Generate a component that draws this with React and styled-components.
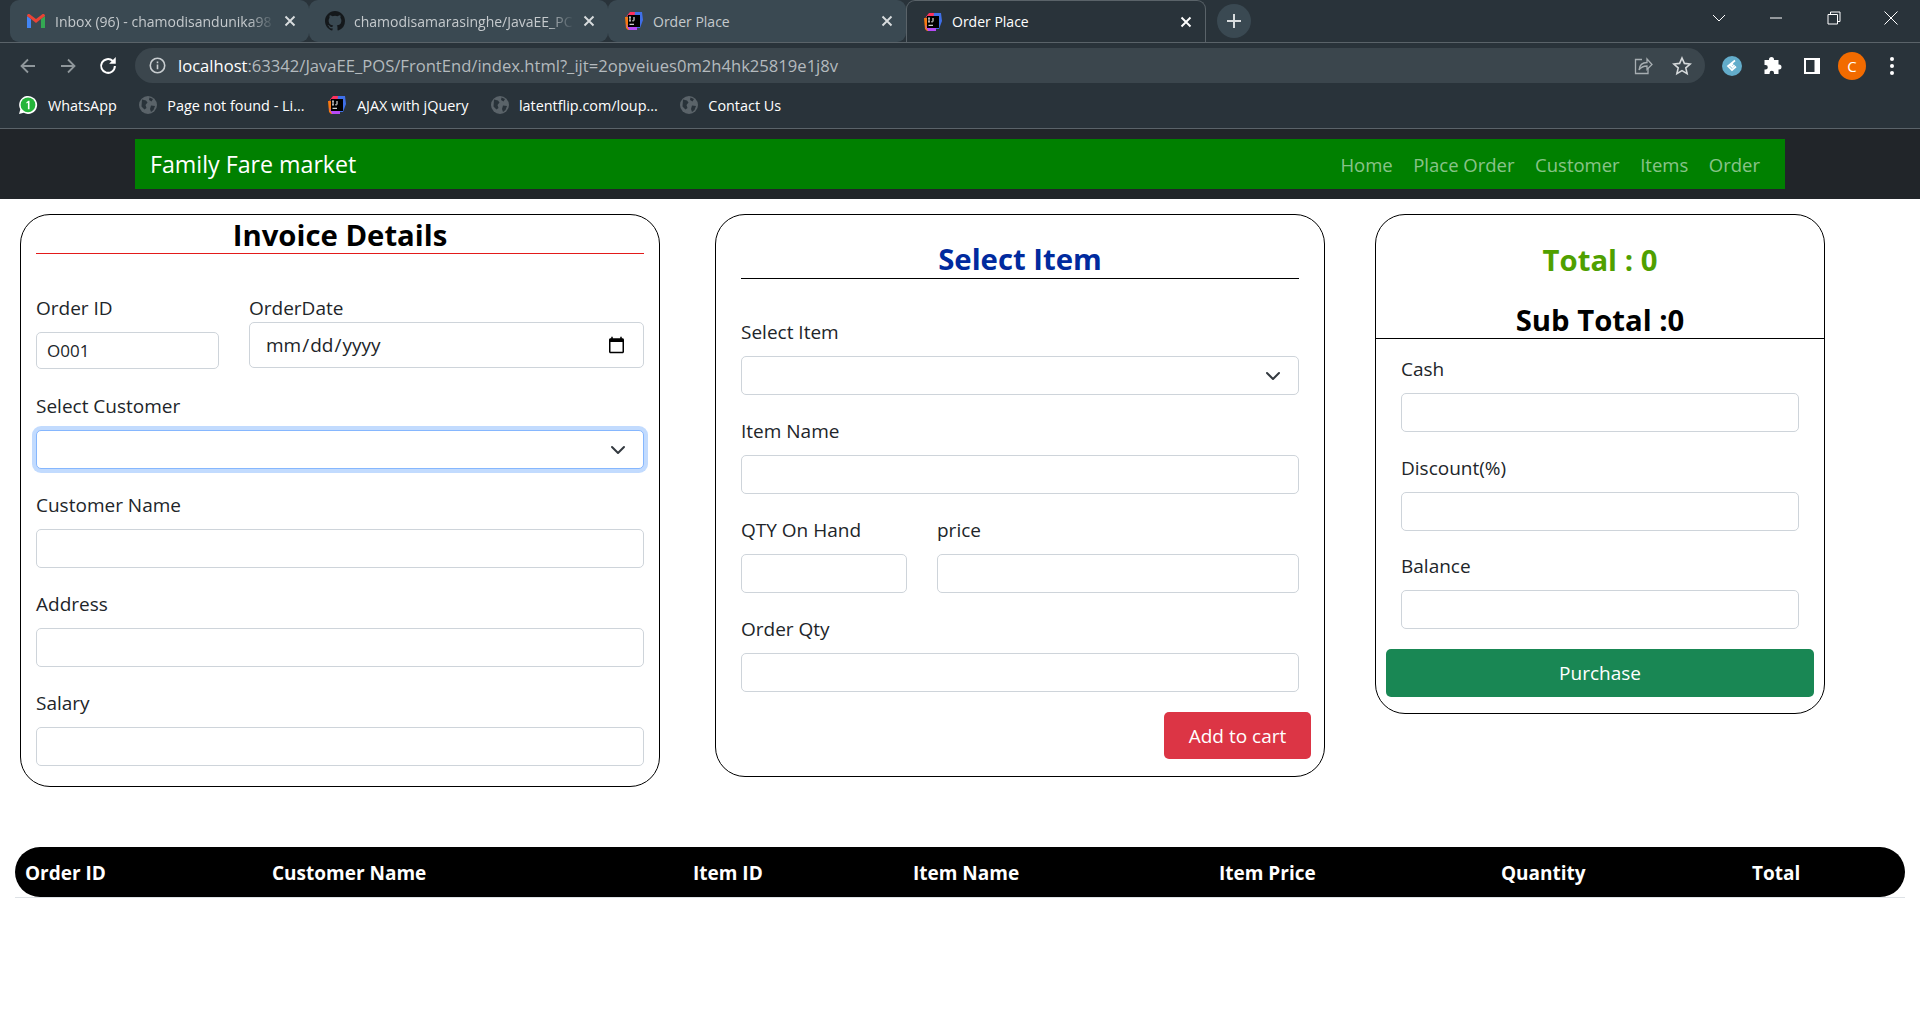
import React from 'react';
import styled, { createGlobalStyle } from 'styled-components';

const FONT = '"Open Sans", "Noto Sans", "Liberation Sans", sans-serif';

const Global = createGlobalStyle`
    html, body {
        margin: 0;
        height: 1030px;
        overflow: hidden;
        background: #fff;
        font-family: ${FONT};
    }
    * { box-sizing: border-box; }
`;

const caret = "data:image/svg+xml,%3csvg xmlns='http://www.w3.org/2000/svg' viewBox='0 0 16 16'%3e%3cpath fill='none' stroke='%23343a40' stroke-linecap='round' stroke-linejoin='round' stroke-width='2' d='M2 5l6 6 6-6'/%3e%3c/svg%3e";

/* browser frame */
const TabStrip = styled.div`
    height: 43px;
    background: #29333a;
    border-bottom: 1px solid #5a6369;
    display: flex;
    align-items: flex-start;
    padding-left: 10px;
`;
const Tab = styled.div`
    width: ${p => p.$width}px;
    height: 42px;
    padding: 0 13px 0 16px;
    display: flex;
    align-items: center;
    gap: 9px;
    font-size: 14px;
    color: ${p => (p.$active ? '#fff' : '#c5cacd')};
    background: ${p => (p.$active ? '#29333a' : '#3a4952')};
    border-radius: 9px 9px ${p => (p.$active ? '0 0' : '9px 9px')};
    border: ${p => (p.$active ? '1px solid #5a6369' : 'none')};
    border-bottom: none;
    margin-bottom: -1px;
`;
const TabTitle = styled.span`
    flex: 1;
    white-space: nowrap;
    overflow: hidden;
    mask-image: ${p => (p.$fade ? 'linear-gradient(to right, #000 88%, transparent)' : 'none')};
`;
const NewTab = styled.div`
    width: 34px;
    height: 34px;
    margin: 4px 0 0 11px;
    border-radius: 50%;
    background: #3a4952;
    display: flex;
    align-items: center;
    justify-content: center;
`;
const WindowControls = styled.div`
    margin-left: auto;
    display: flex;
    align-items: center;
    height: 36px;
`;
const WinButton = styled.div`
    width: 57.5px;
    height: 36px;
    display: flex;
    align-items: center;
    justify-content: center;
`;
const Toolbar = styled.div`
    height: 45px;
    background: #29333a;
    display: flex;
    align-items: center;
`;
const NavIcon = styled.div`
    width: 40px;
    height: 35px;
    display: flex;
    align-items: center;
    justify-content: center;
`;
const NavIcons = styled.div`
    display: flex;
    padding-left: 8px;
    width: 135px;
`;
const AddressBar = styled.div`
    width: 1570px;
    height: 35px;
    border-radius: 18px;
    background: #3b464d;
    display: flex;
    align-items: center;
    padding: 0 4px 0 14px;
    font-size: 16.6px;
    color: #b4babe;
    white-space: nowrap;
`;
const Host = styled.span`
    color: #fff;
`;
const Url = styled.span`
    margin-left: 12px;
    flex: 1;
`;
const BarIcon = styled.div`
    width: 39px;
    display: flex;
    justify-content: center;
`;
const Extensions = styled.div`
    display: flex;
    align-items: center;
    padding-left: 7px;
`;
const ExtSlot = styled.div`
    width: 40px;
    display: flex;
    justify-content: center;
`;
const Avatar = styled.div`
    width: 28px;
    height: 28px;
    border-radius: 50%;
    background: #f26b00;
    color: #fff;
    font-size: 15px;
    display: flex;
    align-items: center;
    justify-content: center;
`;
const Bookmarks = styled.div`
    height: 41px;
    background: #29333a;
    border-bottom: 1px solid #5a6369;
    display: flex;
    align-items: center;
    padding: 0 0 6px 18px;
    gap: 22.5px;
`;
const Bookmark = styled.div`
    display: flex;
    align-items: center;
    gap: 10px;
    font-size: 14.4px;
    color: #fff;
    white-space: nowrap;
`;

/* page navbar */
const NavShell = styled.nav`
    height: 70px;
    background: #212529;
    padding: 10px 135px;
`;
const NavInner = styled.div`
    height: 50px;
    background: #008000;
    display: flex;
    align-items: center;
    justify-content: space-between;
    padding: 0 25px 0 15px;
`;
const Brand = styled.div`
    color: #fff;
    font-size: 23.2px;
`;
const NavLinks = styled.div`
    display: flex;
    gap: 20.5px;
`;
const NavLink = styled.a`
    color: rgba(255, 255, 255, 0.55);
    font-size: 18.5px;
`;

/* cards */
const Cards = styled.div`
    display: flex;
    align-items: flex-start;
    padding: 15px 0 0 20px;
`;
const Card = styled.section`
    width: ${p => p.$width}px;
    margin-right: ${p => p.$gap || 0}px;
    padding: ${p => p.$padding};
    border: 1px solid #000;
    border-radius: 30px;
    background: #fff;
`;
const Heading = styled.h2`
    margin: 0;
    font-size: 29.3px;
    font-weight: 700;
    text-align: center;
    line-height: 38px;
    color: ${p => p.$color || '#000'};
`;
const UnderlinedHeading = styled(Heading)`
    border-bottom: 1px solid ${p => p.$rule};
    padding-top: ${p => p.$top}px;
    height: ${p => p.$height}px;
    margin-bottom: ${p => p.$below}px;
`;
const TotalsHead = styled.div`
    margin: 0 -10px 18px;
    height: 124px;
    padding-top: 26px;
    border-bottom: 1px solid #000;
`;
const SubTotal = styled(Heading)`
    margin-top: 22px;
`;
const Field = styled.div`
    width: ${p => (p.$width ? p.$width + 'px' : 'auto')};
    flex: ${p => (p.$grow ? 1 : 'none')};
    margin-bottom: ${p => (p.$mb === undefined ? 24 : p.$mb)}px;
`;
const FieldRow = styled.div`
    display: flex;
    gap: 30px;
    margin-bottom: ${p => p.$mb || 0}px;
`;
const Label = styled.label`
    display: block;
    height: 24px;
    line-height: 24px;
    font-size: 19px;
    color: #212529;
    margin-bottom: ${p => (p.$gap === undefined ? 12 : p.$gap)}px;
`;
const Input = styled.input`
    display: block;
    width: 100%;
    height: ${p => p.$height || 39}px;
    padding: ${p => p.$padding || '0 10px'};
    font-family: ${FONT};
    font-size: ${p => p.$size || 17}px;
    color: #212529;
    background: #fff;
    border: 1px solid #ced4da;
    border-radius: 5px;
    outline: none;
`;
const Select = styled.select`
    display: block;
    width: 100%;
    height: 39px;
    appearance: none;
    padding: 0 36px 0 12px;
    font-family: ${FONT};
    font-size: 17px;
    background: #fff url("${caret}") no-repeat right 17px center / 16px 16px;
    border: 1px solid ${p => (p.$focused ? '#86b7fe' : '#ced4da')};
    border-radius: 5px;
    box-shadow: ${p => (p.$focused ? '0 0 0 4px rgba(13, 110, 253, 0.25)' : 'none')};
    outline: none;
`;
const ActionRow = styled.div`
    display: flex;
    justify-content: flex-end;
    margin-right: -12px;
`;
const AddButton = styled.button`
    width: 147px;
    height: 47px;
    border: none;
    border-radius: 5px;
    background: #dc3545;
    color: #fff;
    font-family: ${FONT};
    font-size: 19px;
`;
const PurchaseButton = styled.button`
    display: block;
    width: 100%;
    height: 48px;
    margin-top: -4px;
    border: none;
    border-radius: 5px;
    background: #198754;
    color: #fff;
    font-family: ${FONT};
    font-size: 19px;
`;
const CashFields = styled.div`
    padding: 0 15px;
`;

/* table */
const OrderTable = styled.div`
    margin: 60px 15px 0;
    border-bottom: 1px solid #dee2e6;
`;
const HeadRow = styled.div`
    height: 50px;
    padding: 1px 0 0 10px;
    background: #000;
    border-radius: 25px;
    display: grid;
    grid-template-columns: 247px 421px 220px 306px 282px 251px 1fr;
    align-items: center;
`;
const HeadCell = styled.div`
    color: #fff;
    font-weight: 700;
    font-size: 19px;
`;

const Close = ({ color = '#fff' }) => (
    <svg width="12" height="12" viewBox="0 0 12 12"><path d="M1.5 1.5l9 9M10.5 1.5l-9 9" stroke={color} strokeWidth="1.9" /></svg>
);
const Gmail = () => (
    <svg width="20" height="16" viewBox="0 0 20 16">
        <path d="M1 15V3l4 3v9z" fill="#4285f4" /><path d="M15 15V6l4-3v12z" fill="#34a853" />
        <path d="M1 3c0-2 2-2.5 3-1.5L10 6l6-4.500c1-1 3-.5 3 1.500l-4 3-5 4-5-4z" fill="#ea4335" />
    </svg>
);
const GitHub = () => (
    <svg width="20" height="20" viewBox="0 0 16 16"><path fill="#14181b" d="M8 0C3.580 0 0 3.580 0 8c0 3.540 2.290 6.530 5.470 7.590.4.070.55-.17.55-.38v-1.340c-2.230.48-2.700-1.070-2.700-1.070-.36-.92-.89-1.170-.89-1.170-.73-.5.050-.49.050-.49.800.060 1.230.82 1.230.82.710 1.220 1.870.87 2.330.66.070-.52.280-.87.510-1.070-1.780-.2-3.640-.89-3.640-3.950 0-.87.310-1.590.820-2.150-.08-.2-.36-1.020.08-2.120 0 0 .67-.21 2.200.82a7.600 7.600 0 0 1 4 0c1.530-1.040 2.200-.82 2.200-.82.440 1.100.160 1.920.080 2.120.510.560.820 1.270.820 2.150 0 3.070-1.870 3.750-3.650 3.950.290.250.540.730.540 1.480v2.200c0 .21.150.46.550.38A8 8 0 0 0 16 8c0-4.420-3.580-8-8-8z" /></svg>
);
const IntelliJ = () => (
    <svg width="20" height="20" viewBox="0 0 20 20">
        <path d="M2 6l4-5h6v4H4z" fill="#fe315d" /><path d="M11 1h7l1 8-3 8H9z" fill="#3f6fe8" />
        <path d="M1 6h4v10l4 3H4l-2-2z" fill="#f97a12" /><path d="M2 13l3 6h8v-3H5z" fill="#b74af7" />
        <rect x="4" y="4" width="12" height="12" fill="#000" />
        <rect x="5.5" y="12.8" width="4.5" height="1" fill="#fff" />
        <path d="M6 6v4M5.200 6h1.600M5.200 10h1.600M10 6v3.300c0 .7-1.200.9-1.800.3" stroke="#fff" strokeWidth="1" fill="none" />
    </svg>
);
const Globe = () => (
    <svg width="18" height="18" viewBox="0 0 18 18">
        <circle cx="9" cy="9" r="9" fill="#5a6369" />
        <path d="M3 3.500l4 1 1.500 2-2 2.500 1 3-2 1.500-3-3zM10.500 1.500l3.500 1.500-1.500 2.500-2.500-1.500zM12 9.500l4 .5-1.500 4-2.500 2-1-3z" fill="#29333a" />
    </svg>
);
const WhatsApp = () => (
    <svg width="20" height="20" viewBox="0 0 20 20">
        <path d="M1 19l1.300-4.600A9 9 0 1 1 5.700 17.800z" fill="#fff" />
        <circle cx="10" cy="9.8" r="7.4" fill="#25b53a" />
        <path d="M8.400 7.300L10.400 5.700h1.100v8.500h-1.600V7.700L8.400 8.600z" fill="#fff" />
    </svg>
);
const Arrow = ({ flip }) => (
    <svg width="18" height="18" viewBox="0 0 18 18" style={flip ? { transform: 'scaleX(-1)' } : undefined}>
        <path d="M16 9H3M9 2.500L2.500 9 9 15.500" fill="none" stroke="#8f979b" strokeWidth="1.8" />
    </svg>
);
const Reload = () => (
    <svg width="20" height="20" viewBox="0 0 18 18">
        <path d="M15.200 9a6.200 6.200 0 1 1-1.900-4.500" fill="none" stroke="#fff" strokeWidth="1.8" />
        <path d="M16 1v6h-6z" fill="#fff" />
    </svg>
);
const Info = () => (
    <svg width="17" height="17" viewBox="0 0 16 16" fill="none" stroke="#c8cdd0" strokeWidth="1.5">
        <circle cx="8" cy="8" r="6.8" /><path d="M8 7v4.500M8 4.200v1.600" />
    </svg>
);
const Share = () => (
    <svg width="20" height="20" viewBox="0 0 20 20" fill="none" stroke="#a7aeb2" strokeWidth="1.3">
        <path d="M9 3.500H2.500v14h12.500v-5" /><path d="M6 14c.5-5 4-7.500 8-7.500V3l5 5.500-5 5V10c-3.500 0-6 1-8 4z" />
    </svg>
);
const Star = () => (
    <svg width="20" height="20" viewBox="0 0 20 20"><path d="M10 2l2.400 5.400 5.800.6-4.400 3.900 1.300 5.700-5.100-3-5.100 3 1.300-5.700L1.800 8l5.800-.6z" fill="none" stroke="#d5d9db" strokeWidth="1.6" /></svg>
);
const ExtBadge = () => (
    <svg width="20" height="20" viewBox="0 0 20 20">
        <circle cx="10" cy="10" r="10" fill="#63adcb" />
        <path d="M13 4.500L6 10l4 4 4-3.500M11 7.500L8.800 9.800l1.500 1.400 2.200-2" fill="none" stroke="#fff" strokeWidth="1.7" />
    </svg>
);
const Puzzle = () => (
    <svg width="19" height="19" viewBox="0 0 19 19"><path fill="#fff" d="M6 3.500a2.500 2.500 0 0 1 5 0V4h4.500v4.500H16a2.500 2.500 0 0 1 0 5h-.5V18H11v-1a2.200 2.200 0 0 0-4.400 0v1H1.500v-4.500h1a2.300 2.300 0 0 0 0-4.600h-1V4H6z" /></svg>
);
const SidePanel = () => (
    <svg width="18" height="18" viewBox="0 0 18 18"><rect x="1" y="1" width="16" height="16" fill="#fff" /><rect x="3" y="3" width="8.5" height="12" fill="#29333a" /></svg>
);
const Dots = () => (
    <svg width="6" height="20" viewBox="0 0 6 20" fill="#fff"><circle cx="3" cy="3" r="2" /><circle cx="3" cy="10" r="2" /><circle cx="3" cy="17" r="2" /></svg>
);
const Plus = () => (
    <svg width="16" height="16" viewBox="0 0 16 16"><path d="M8 1v14M1 8h14" stroke="#d8dcde" strokeWidth="2" /></svg>
);
const WinIcon = ({ d, size = 14 }) => (
    <svg width={size} height={size} viewBox="0 0 14 14"><path d={d} fill="none" stroke="#fff" strokeWidth="1" /></svg>
);

const columns = ['Order ID', 'Customer Name', 'Item ID', 'Item Name', 'Item Price', 'Quantity', 'Total'];

export default class App extends React.PureComponent {
    render() {
        return (
            <>
                <Global />
                <TabStrip>
                    <Tab $width={299}><Gmail /><TabTitle $fade>Inbox (96) - chamodisandunika98</TabTitle><Close color="#d8dcde" /></Tab>
                    <Tab $width={299}><GitHub /><TabTitle $fade>chamodisamarasinghe/JavaEE_PC</TabTitle><Close color="#d8dcde" /></Tab>
                    <Tab $width={298}><IntelliJ /><TabTitle>Order Place</TabTitle><Close color="#d8dcde" /></Tab>
                    <Tab $width={300} $active><IntelliJ /><TabTitle>Order Place</TabTitle><Close /></Tab>
                    <NewTab><Plus /></NewTab>
                    <WindowControls>
                        <WinButton><WinIcon d="M1 4l6 6 6-6" /></WinButton>
                        <WinButton><WinIcon d="M1 7h12" /></WinButton>
                        <WinButton><WinIcon d="M1 3.500h9.500V13H1zM3.500 3.500V1H13v9.500h-2.500" /></WinButton>
                        <WinButton><WinIcon d="M0.500 0.500l13 13M13.500 0.500l-13 13" /></WinButton>
                    </WindowControls>
                </TabStrip>
                <Toolbar>
                    <NavIcons>
                        <NavIcon><Arrow /></NavIcon>
                        <NavIcon><Arrow flip /></NavIcon>
                        <NavIcon><Reload /></NavIcon>
                    </NavIcons>
                    <AddressBar>
                        <Info />
                        <Url><Host>localhost</Host>:63342/JavaEE_POS/FrontEnd/index.html?_ijt=2opveiues0m2h4hk25819e1j8v</Url>
                        <BarIcon><Share /></BarIcon>
                        <BarIcon><Star /></BarIcon>
                    </AddressBar>
                    <Extensions>
                        <ExtSlot><ExtBadge /></ExtSlot>
                        <ExtSlot><Puzzle /></ExtSlot>
                        <ExtSlot><SidePanel /></ExtSlot>
                        <ExtSlot><Avatar>C</Avatar></ExtSlot>
                        <ExtSlot><Dots /></ExtSlot>
                    </Extensions>
                </Toolbar>
                <Bookmarks>
                    <Bookmark><WhatsApp />WhatsApp</Bookmark>
                    <Bookmark><Globe />Page not found - Li...</Bookmark>
                    <Bookmark><IntelliJ />AJAX with jQuery</Bookmark>
                    <Bookmark><Globe />latentflip.com/loup...</Bookmark>
                    <Bookmark><Globe />Contact Us</Bookmark>
                </Bookmarks>
                <NavShell>
                    <NavInner>
                        <Brand>Family Fare market</Brand>
                        <NavLinks>
                            {['Home', 'Place Order', 'Customer', 'Items', 'Order'].map(link => <NavLink key={link}>{link}</NavLink>)}
                        </NavLinks>
                    </NavInner>
                </NavShell>
                <Cards>
                    <Card $width={640} $gap={55} $padding="0 15px 20px">
                        <UnderlinedHeading $rule="#e31a1a" $top={1} $height={39} $below={42}>Invoice Details</UnderlinedHeading>
                        <FieldRow $mb={25}>
                            <Field $width={183} $mb={0}>
                                <Label>Order ID</Label>
                                <Input readOnly value="O001" $height={37} />
                            </Field>
                            <Field $grow $mb={0}>
                                <Label $gap={2}>OrderDate</Label>
                                <Input type="date" $height={46} $size={19} $padding="0 15px" />
                            </Field>
                        </FieldRow>
                        <Field>
                            <Label>Select Customer</Label>
                            <Select $focused />
                        </Field>
                        <Field><Label>Customer Name</Label><Input /></Field>
                        <Field><Label>Address</Label><Input /></Field>
                        <Field $mb={0}><Label>Salary</Label><Input /></Field>
                    </Card>
                    <Card $width={610} $gap={50} $padding="0 25px 17px">
                        <UnderlinedHeading $color="#002a9e" $rule="#000" $top={25} $height={64} $below={41}>Select Item</UnderlinedHeading>
                        <Field><Label>Select Item</Label><Select /></Field>
                        <Field><Label>Item Name</Label><Input /></Field>
                        <FieldRow>
                            <Field $width={166}><Label>QTY On Hand</Label><Input /></Field>
                            <Field $grow><Label>price</Label><Input /></Field>
                        </FieldRow>
                        <Field $mb={20}><Label>Order Qty</Label><Input /></Field>
                        <ActionRow><AddButton>Add to cart</AddButton></ActionRow>
                    </Card>
                    <Card $width={450} $padding="0 10px 16px">
                        <TotalsHead>
                            <Heading $color="#4fa000">Total : 0</Heading>
                            <SubTotal>Sub Total :0</SubTotal>
                        </TotalsHead>
                        <CashFields>
                            <Field $mb={23.5}><Label>Cash</Label><Input /></Field>
                            <Field $mb={23.5}><Label>Discount(%)</Label><Input /></Field>
                            <Field $mb={23.5}><Label>Balance</Label><Input /></Field>
                        </CashFields>
                        <PurchaseButton>Purchase</PurchaseButton>
                    </Card>
                </Cards>
                <OrderTable>
                    <HeadRow>
                        {columns.map(column => <HeadCell key={column}>{column}</HeadCell>)}
                    </HeadRow>
                </OrderTable>
            </>
        );
    }
}
